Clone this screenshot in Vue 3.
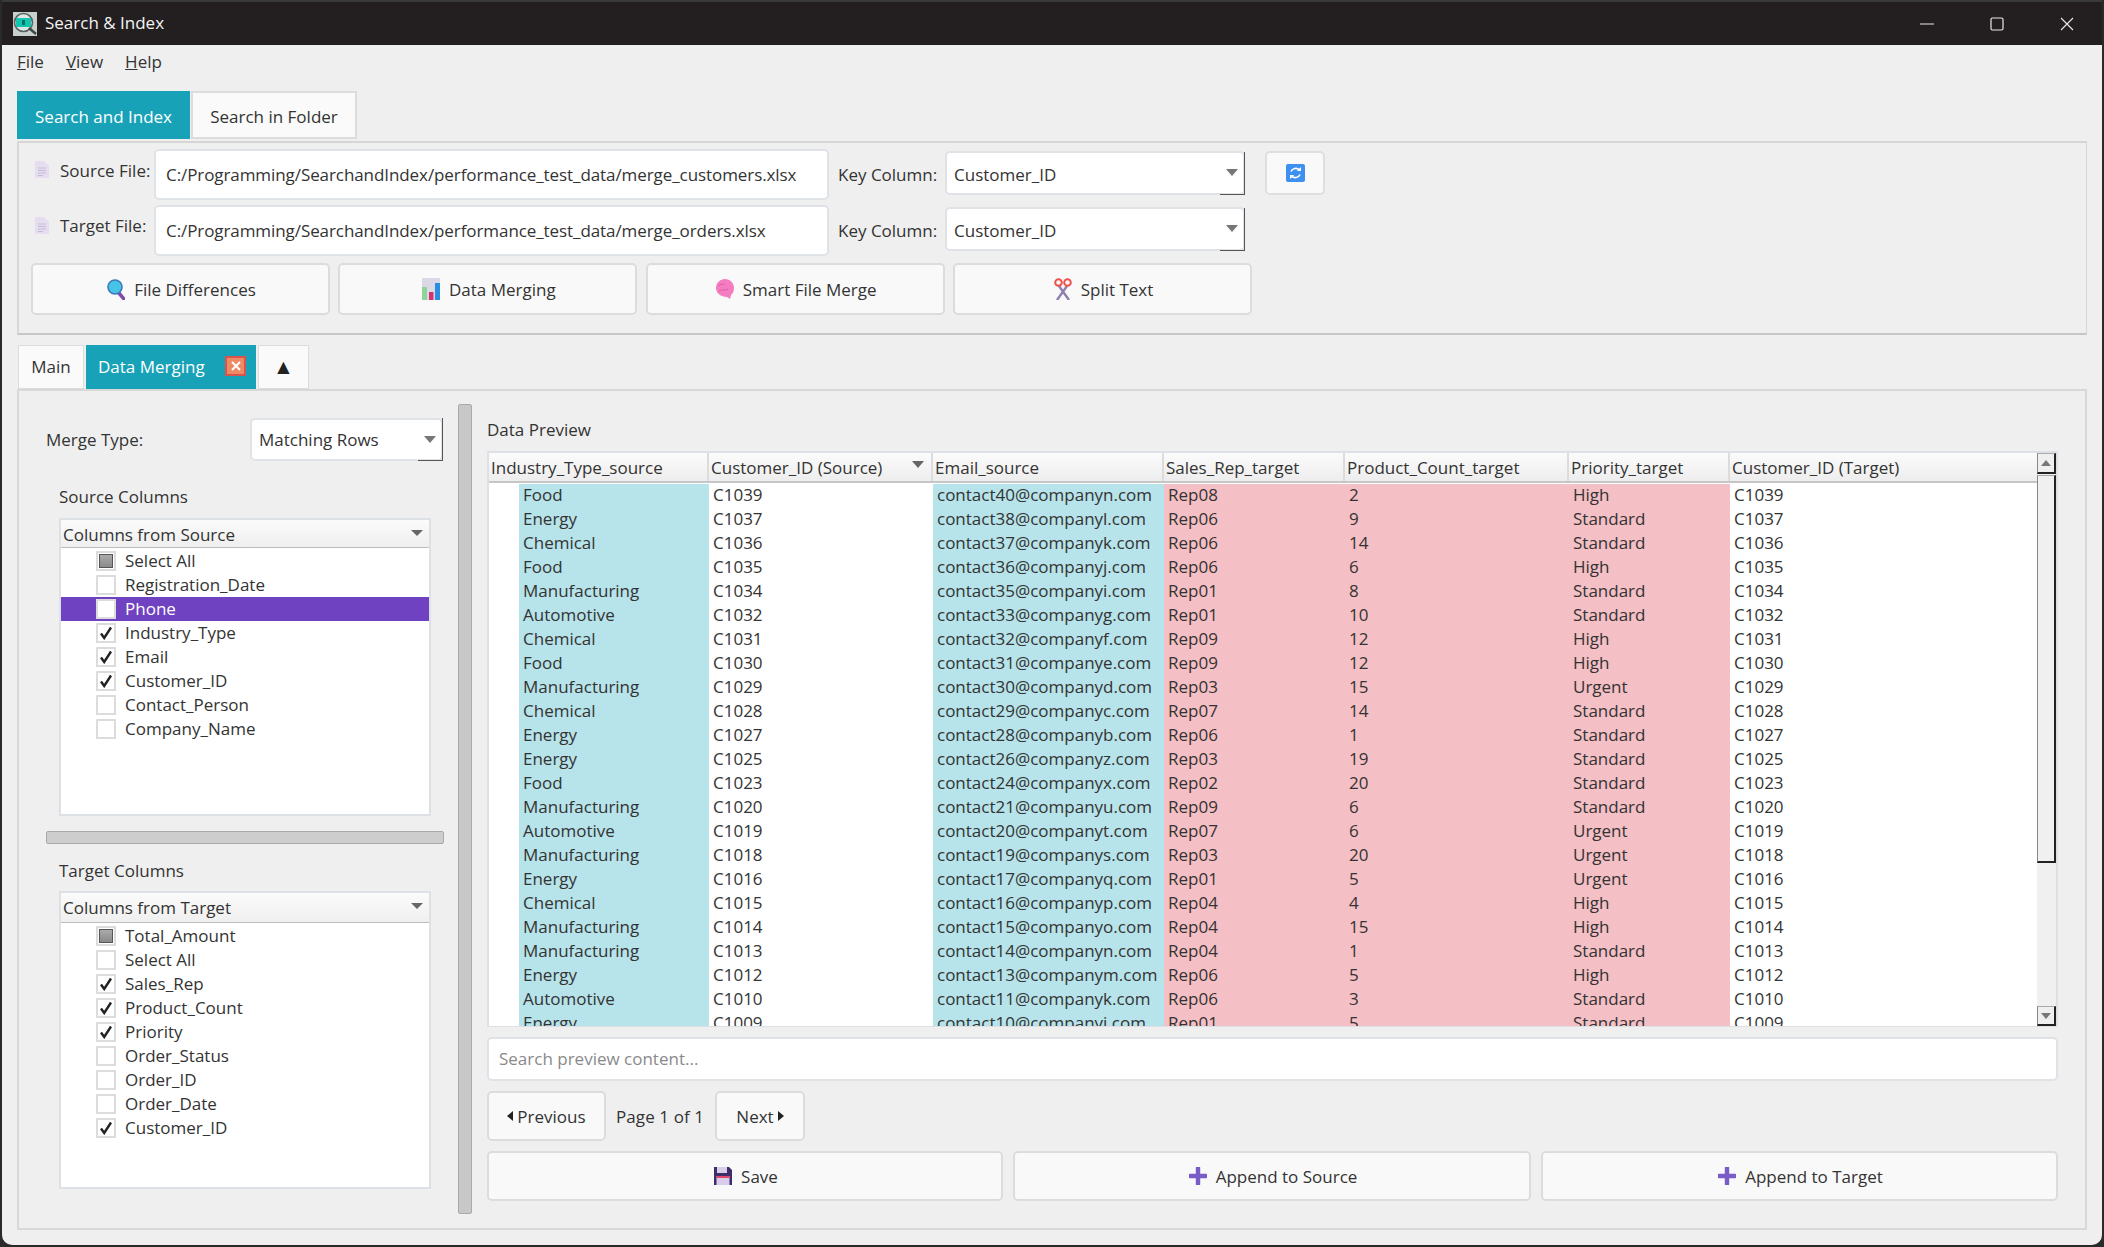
<template>
  <div class="window">
    <div class="titlebar">
      <svg class="app-icon" viewBox="0 0 24 24">
        <rect width="24" height="24" fill="#c9cfcc" />
        <circle cx="10.5" cy="10.5" r="9" fill="#dfe8e6" stroke="#56635f" stroke-width="1.6" />
        <rect x="3" y="6" width="15" height="9" fill="#12c7b0" />
        <rect x="9" y="8" width="3" height="5" fill="#0b6e62" />
        <path d="M16 16l7 6" stroke="#3d4643" stroke-width="2.4" />
      </svg>
      <span class="app-title">Search &amp; Index</span>
      <div class="win-controls">
        <svg viewBox="0 0 14 14"><path d="M0 7h14" stroke="#e8e8e8" stroke-width="1" /></svg>
        <svg viewBox="0 0 14 14"><rect x="1" y="1" width="12" height="12" rx="1.5" fill="none" stroke="#e8e8e8" stroke-width="1.2" /></svg>
        <svg viewBox="0 0 14 14"><path d="M1 1l12 12M13 1L1 13" stroke="#e8e8e8" stroke-width="1.1" /></svg>
      </div>
    </div>

    <div class="menubar">
      <span><u>F</u>ile</span>
      <span><u>V</u>iew</span>
      <span><u>H</u>elp</span>
    </div>

    <div class="content">
      <div class="top-tabs">
        <div class="top-tab active">Search and Index</div>
        <div class="top-tab">Search in Folder</div>
      </div>

      <div class="file-panel">
        <div v-for="f in files" :key="f.label" class="file-row" :class="f.cls">
          <svg class="doc-icon" viewBox="0 0 14 17">
            <path d="M0 0h9l5 5v12H0z" fill="#e6def0" />
            <path d="M3 7h8M3 9.5h8M3 12h8M3 14.5h5" stroke="#c5bdd0" stroke-width="1" />
          </svg>
          <label class="file-label">{{ f.label }}</label>
          <div class="path-input">{{ f.path }}</div>
          <label class="key-label">Key Column:</label>
          <div class="combo key-combo">
            <span>Customer_ID</span>
            <i class="combo-arrow"></i>
          </div>
          <button v-if="f.refresh" class="refresh-btn">
            <svg viewBox="0 0 19 18" width="19" height="18">
              <rect width="19" height="18" rx="2" fill="#3d8ff0" />
              <path d="M5 7.5a5 4.6 0 0 1 8.5-1.5M14 10.5a5 4.6 0 0 1-8.5 1.5" fill="none" stroke="#fff" stroke-width="1.6" />
              <path d="M15 3v4h-4.200zM4 15v-4h4.200z" fill="#fff" />
            </svg>
          </button>
        </div>

        <div class="tool-row">
          <button class="tool-btn">
            <svg viewBox="0 0 18 22" width="18" height="22">
              <path d="M11 14l6 7" stroke="#7d4da8" stroke-width="3.5" stroke-linecap="round" />
              <circle cx="8" cy="9" r="7" fill="#45c4e8" stroke="#3f78b8" stroke-width="1.6" />
            </svg>
            File Differences
          </button>
          <button class="tool-btn">
            <svg viewBox="0 0 18 22" width="18" height="22">
              <rect width="18" height="22" fill="#dcd8e8" />
              <rect x="0" y="9" width="5" height="13" fill="#8fd49a" />
              <rect x="7" y="14" width="4.5" height="8" fill="#d8326e" />
              <rect x="13" y="5" width="5" height="17" fill="#2b8fe0" />
            </svg>
            Data Merging
          </button>
          <button class="tool-btn">
            <svg viewBox="0 0 18 22" width="18" height="22">
              <path d="M9 1c5 0 9 4 9 9 0 4-2 6-3 7l-1 4-3-2C5 19 0 15 0 10c0-5 4-9 9-9z" fill="#f47cc0" />
              <path d="M2 8c3-3 5-1 7-2M3 13c3-2 6 0 9-2" stroke="#e85aa8" stroke-width="1" fill="none" />
            </svg>
            Smart File Merge
          </button>
          <button class="tool-btn">
            <svg viewBox="0 0 18 22" width="18" height="22">
              <path d="M5 8l10 14M13 8L3 22" stroke="#8d7fb0" stroke-width="2.4" />
              <circle cx="4.5" cy="4.500" r="3.300" fill="none" stroke="#f0504a" stroke-width="2" />
              <circle cx="13.5" cy="4.500" r="3.300" fill="none" stroke="#f0504a" stroke-width="2" />
            </svg>
            Split Text
          </button>
        </div>
      </div>

      <div class="main-tabs">
        <div class="main-tab main">Main</div>
        <div class="main-tab merging">
          Data Merging
          <span class="tab-close">
            <svg viewBox="0 0 10 10" width="10" height="10"><path d="M1 1l8 8M9 1l-8 8" stroke="#fff" stroke-width="2" /></svg>
          </span>
        </div>
        <div class="main-tab more">▲</div>
      </div>

      <div class="merge-panel">
        <div class="left-pane">
          <div class="merge-row">
            <label>Merge Type:</label>
            <div class="combo type-combo">
              <span>Matching Rows</span>
              <i class="combo-arrow"></i>
            </div>
          </div>

          <div class="group-title first">Source Columns</div>
          <div class="col-box">
            <div class="col-head">Columns from Source<i class="head-arrow"></i></div>
            <div
              v-for="c in sourceCols"
              :key="c.name"
              class="col-item"
              :class="{ selected: c.selected }"
            >
              <span class="check" :class="{ partial: c.state === 'partial' }">
                <svg v-if="c.state === 'on'" viewBox="0 0 14 14" width="14" height="14">
                  <path d="M2 7.5l3.2 4.5L12 1.5" fill="none" stroke="#222" stroke-width="2.4" />
                </svg>
              </span>
              {{ c.name }}
            </div>
          </div>

          <div class="h-splitter"></div>

          <div class="group-title">Target Columns</div>
          <div class="col-box target">
            <div class="col-head">Columns from Target<i class="head-arrow"></i></div>
            <div v-for="c in targetCols" :key="c.name" class="col-item">
              <span class="check" :class="{ partial: c.state === 'partial' }">
                <svg v-if="c.state === 'on'" viewBox="0 0 14 14" width="14" height="14">
                  <path d="M2 7.5l3.2 4.5L12 1.5" fill="none" stroke="#222" stroke-width="2.4" />
                </svg>
              </span>
              {{ c.name }}
            </div>
          </div>
        </div>

        <div class="v-splitter"></div>

        <div class="right-pane">
          <div class="preview-title">Data Preview</div>

          <div class="table-wrap">
            <div class="table-main">
              <div class="t-row t-head">
                <div v-for="h in headers" :key="h" class="t-cell">{{ h }}</div>
                <i class="sort-arrow"></i>
              </div>
              <div class="t-body">
                <div v-for="r in rows" :key="r.id + r.mail" class="t-row">
                  <div class="t-cell src first-col">{{ r.type }}</div>
                  <div class="t-cell">{{ r.id }}</div>
                  <div class="t-cell src">{{ r.mail }}</div>
                  <div class="t-cell tgt">{{ r.rep }}</div>
                  <div class="t-cell tgt">{{ r.count }}</div>
                  <div class="t-cell tgt">{{ r.priority }}</div>
                  <div class="t-cell">{{ r.id }}</div>
                </div>
              </div>
            </div>
            <div class="scrollbar">
              <div class="sb-btn"><i class="sb-up"></i></div>
              <div class="sb-thumb"></div>
              <div class="sb-track"></div>
              <div class="sb-btn down"><i class="sb-down"></i></div>
            </div>
          </div>

          <div class="search-input">Search preview content...</div>

          <div class="pager">
            <button class="page-btn prev"><i class="tri-left"></i>Previous</button>
            <span class="page-label">Page 1 of 1</span>
            <button class="page-btn next">Next<i class="tri-right"></i></button>
          </div>

          <div class="action-row">
            <button class="action-btn">
              <svg viewBox="0 0 18 18" width="18" height="18">
                <path d="M0 0h15l3 3v15H0z" fill="#3d2d6b" />
                <rect x="3" y="0" width="10" height="6" fill="#d8d0e8" />
                <rect x="2.5" y="9" width="13" height="9" fill="#d9cdee" />
                <rect x="2.5" y="9" width="13" height="2" fill="#e2456b" />
              </svg>
              Save
            </button>
            <button class="action-btn">
              <svg viewBox="0 0 18 18" width="18" height="18">
                <path d="M9 1v16M1 9h16" stroke="#7a5cc8" stroke-width="4.4" stroke-linecap="round" />
              </svg>
              Append to Source
            </button>
            <button class="action-btn">
              <svg viewBox="0 0 18 18" width="18" height="18">
                <path d="M9 1v16M1 9h16" stroke="#7a5cc8" stroke-width="4.4" stroke-linecap="round" />
              </svg>
              Append to Target
            </button>
          </div>
        </div>
      </div>
    </div>
  </div>
</template>

<script setup>
const base = 'C:/Programming/SearchandIndex/performance_test_data/';

const files = [
  { label: 'Source File:', path: base + 'merge_customers.xlsx', cls: 'src-row', refresh: true },
  { label: 'Target File:', path: base + 'merge_orders.xlsx', cls: 'tgt-row', refresh: false },
];

const sourceCols = [
  { name: 'Select All', state: 'partial' },
  { name: 'Registration_Date', state: 'off' },
  { name: 'Phone', state: 'off', selected: true },
  { name: 'Industry_Type', state: 'on' },
  { name: 'Email', state: 'on' },
  { name: 'Customer_ID', state: 'on' },
  { name: 'Contact_Person', state: 'off' },
  { name: 'Company_Name', state: 'off' },
];

const targetCols = [
  { name: 'Total_Amount', state: 'partial' },
  { name: 'Select All', state: 'off' },
  { name: 'Sales_Rep', state: 'on' },
  { name: 'Product_Count', state: 'on' },
  { name: 'Priority', state: 'on' },
  { name: 'Order_Status', state: 'off' },
  { name: 'Order_ID', state: 'off' },
  { name: 'Order_Date', state: 'off' },
  { name: 'Customer_ID', state: 'on' },
];

const headers = [
  'Industry_Type_source',
  'Customer_ID (Source)',
  'Email_source',
  'Sales_Rep_target',
  'Product_Count_target',
  'Priority_target',
  'Customer_ID (Target)',
];

// type | id | mail number+letter | rep | count | priority
const raw = [
  ['Food', 1039, '40', 'n', '08', 2, 'High'],
  ['Energy', 1037, '38', 'l', '06', 9, 'Standard'],
  ['Chemical', 1036, '37', 'k', '06', 14, 'Standard'],
  ['Food', 1035, '36', 'j', '06', 6, 'High'],
  ['Manufacturing', 1034, '35', 'i', '01', 8, 'Standard'],
  ['Automotive', 1032, '33', 'g', '01', 10, 'Standard'],
  ['Chemical', 1031, '32', 'f', '09', 12, 'High'],
  ['Food', 1030, '31', 'e', '09', 12, 'High'],
  ['Manufacturing', 1029, '30', 'd', '03', 15, 'Urgent'],
  ['Chemical', 1028, '29', 'c', '07', 14, 'Standard'],
  ['Energy', 1027, '28', 'b', '06', 1, 'Standard'],
  ['Energy', 1025, '26', 'z', '03', 19, 'Standard'],
  ['Food', 1023, '24', 'x', '02', 20, 'Standard'],
  ['Manufacturing', 1020, '21', 'u', '09', 6, 'Standard'],
  ['Automotive', 1019, '20', 't', '07', 6, 'Urgent'],
  ['Manufacturing', 1018, '19', 's', '03', 20, 'Urgent'],
  ['Energy', 1016, '17', 'q', '01', 5, 'Urgent'],
  ['Chemical', 1015, '16', 'p', '04', 4, 'High'],
  ['Manufacturing', 1014, '15', 'o', '04', 15, 'High'],
  ['Manufacturing', 1013, '14', 'n', '04', 1, 'Standard'],
  ['Energy', 1012, '13', 'm', '06', 5, 'High'],
  ['Automotive', 1010, '11', 'k', '06', 3, 'Standard'],
  ['Energy', 1009, '10', 'j', '01', 5, 'Standard'],
];

const rows = raw.map(([type, id, n, l, rep, count, priority]) => ({
  type,
  id: 'C' + id,
  mail: `contact${n}@company${l}.com`,
  rep: 'Rep' + rep,
  count,
  priority,
}));
</script>

<style>
html,
body {
  margin: 0;
  background: #2a2a2a;
}
</style>

<style scoped>
.window {
  width: 2100px;
  height: 1245px;
  margin-left: 2px;
  background: #efefef;
  border-radius: 0 0 10px 10px;
  overflow: hidden;
  font-family: 'Open Sans', 'Liberation Sans', sans-serif;
  font-size: 17px;
  color: #333;
  display: flex;
  flex-direction: column;
}

button {
  font: inherit;
  color: inherit;
}

.titlebar {
  height: 45px;
  flex: none;
  box-sizing: border-box;
  border-top: 2px solid #3b3a3a;
  background: #231f20;
  display: flex;
  align-items: center;
  padding-left: 11px;
  color: #f4f4f4;
}

.app-icon {
  width: 24px;
  height: 24px;
}

.app-title {
  margin-left: 8px;
  font-size: 17px;
  margin-top: -2px;
}

.win-controls {
  margin-left: auto;
  display: flex;
  align-items: center;
  gap: 56px;
  padding-right: 28px;
}

.win-controls svg {
  width: 14px;
  height: 14px;
}

.menubar {
  height: 46px;
  flex: none;
  display: flex;
  align-items: center;
  gap: 22px;
  padding-left: 15px;
  padding-bottom: 13px;
  box-sizing: border-box;
}

.content {
  flex: 1;
  padding: 0 15px 0 15px;
  display: flex;
  flex-direction: column;
}

.top-tabs {
  display: flex;
  height: 48px;
  flex: none;
}

.top-tab {
  width: 166px;
  box-sizing: border-box;
  display: flex;
  align-items: center;
  justify-content: center;
  background: #fafafa;
  border: 2px solid #dcdcdc;
  margin-left: 1px;
  padding-top: 2px;
}

.top-tab.active {
  width: 173px;
  margin-left: 0;
  background: #17a2b8;
  border-color: #17a2b8;
  color: #fff;
}

.file-panel {
  margin-top: 2px;
  height: 194px;
  box-sizing: border-box;
  border: 2px solid #d6d6d6;
  border-right-width: 1px;
  border-bottom-color: #c6c6c6;
  padding-top: 6px;
  flex: none;
}

.file-row {
  display: flex;
  align-items: center;
  height: 51px;
  margin-bottom: 5px;
  padding-left: 16px;
}

.doc-icon {
  width: 14px;
  height: 17px;
  margin-top: -10px;
}

.file-label {
  width: 94px;
  margin-left: 11px;
  margin-top: -8px;
  white-space: nowrap;
}

.tgt-row .file-label {
  margin-top: -10px;
}

.path-input {
  width: 675px;
  height: 51px;
  box-sizing: border-box;
  background: #fff;
  border: 2px solid #dfe2e6;
  border-radius: 5px;
  padding-left: 10px;
  line-height: 48px;
  letter-spacing: -0.08px;
  white-space: nowrap;
  overflow: hidden;
}

.key-label {
  width: 107px;
  margin-left: 9px;
  white-space: nowrap;
}

.combo {
  box-sizing: border-box;
  background: #fff;
  border: 2px solid #dfe2e6;
  border-radius: 5px;
  display: flex;
  align-items: center;
  position: relative;
}

.combo::after {
  content: '';
  position: absolute;
  right: -2px;
  bottom: -2px;
  width: 24px;
  height: 42px;
  border-right: 1px solid #555;
  border-bottom: 1px solid #555;
}

.combo-arrow {
  position: absolute;
  right: 5px;
  top: 50%;
  margin-top: -4px;
  border: 6px solid transparent;
  border-top: 7px solid #777;
  border-bottom: 0;
}

.key-combo {
  width: 300px;
  height: 44px;
  padding: 2px 0 0 7px;
  margin-top: -3px;
}

.refresh-btn {
  width: 60px;
  height: 44px;
  margin-left: 20px;
  margin-top: -3px;
  background: #f9f9f9;
  border: 2px solid #dfdfdf;
  border-radius: 5px;
  display: flex;
  align-items: center;
  justify-content: center;
  padding: 0;
}

.tool-row {
  display: flex;
  gap: 8.33px;
  padding-left: 12px;
  margin-top: 7px;
}

.tool-btn,
.action-btn,
.page-btn {
  background: #f9f9f9;
  border: 2px solid #dcdcdc;
  border-radius: 5px;
  display: flex;
  align-items: center;
  justify-content: center;
  gap: 9px;
  padding: 0;
}

.tool-btn {
  width: 299px;
  height: 52px;
  padding-left: 2px;
}

.main-tabs {
  margin-top: 10px;
  height: 44px;
  flex: none;
  display: flex;
  padding-left: 1px;
  gap: 2px;
}

.main-tab {
  box-sizing: border-box;
  background: #fafafa;
  border: 1px solid #dcdcdc;
  display: flex;
  align-items: center;
  justify-content: center;
  padding-bottom: 2px;
}

.main-tab.main {
  width: 66px;
}

.main-tab.merging {
  width: 170px;
  background: #17a2b8;
  border-color: #17a2b8;
  color: #fff;
  justify-content: flex-start;
  padding-left: 11px;
  position: relative;
}

.tab-close {
  position: absolute;
  left: 138px;
  top: 10px;
  width: 21px;
  height: 20px;
  box-sizing: border-box;
  background: #ee8a63;
  border: 2px solid #d9534f;
  display: flex;
  align-items: center;
  justify-content: center;
}

.main-tab.more {
  width: 51px;
  color: #222;
  font-size: 21px;
}

.merge-panel {
  height: 841px;
  box-sizing: border-box;
  border: 2px solid #d8d8d8;
  display: flex;
  flex: none;
}

.left-pane {
  width: 439px;
  flex: none;
  box-sizing: border-box;
  padding: 27px 0 0 27px;
}

.merge-row {
  display: flex;
  align-items: center;
  height: 43px;
}

.merge-row label {
  width: 204px;
}

.type-combo {
  width: 193px;
  height: 43px;
  padding-left: 7px;
}

.group-title {
  margin-left: 13px;
  line-height: 24px;
  margin-top: 15px;
}

.group-title.first {
  margin-top: 24px;
}

.col-box {
  margin: 9px 0 0 13px;
  width: 372px;
  height: 298px;
  box-sizing: border-box;
  background: #fff;
  border: 2px solid #dde0e4;
}

.col-box.target {
  margin-top: 8px;
}

.col-head {
  height: 28px;
  box-sizing: border-box;
  padding-left: 2px;
  line-height: 30px;
  background: linear-gradient(#fbfbfb, #efefef);
  border-bottom: 1px solid #bdbdbd;
  margin: 0 0 1px;
  position: relative;
}

.target .col-head {
  height: 30px;
}

.head-arrow {
  position: absolute;
  right: 6px;
  top: 10px;
  border: 6px solid transparent;
  border-top: 6px solid #666;
  border-bottom: 0;
}

.col-item {
  height: 24px;
  line-height: 24px;
  display: flex;
  align-items: center;
  padding-left: 35px;
}

.col-item.selected {
  background: #6f42c1;
  color: #fff;
}

.check {
  width: 20px;
  height: 20px;
  box-sizing: border-box;
  border: 2px solid #dcdcdc;
  background: #fff;
  display: flex;
  align-items: center;
  justify-content: center;
  margin-right: 9px;
  flex: none;
}

.check.partial::before {
  content: '';
  width: 14px;
  height: 14px;
  box-sizing: border-box;
  background: linear-gradient(#aaa, #8a8a8a);
  border: 1px solid #555;
}

.h-splitter {
  width: 398px;
  height: 13px;
  box-sizing: border-box;
  background: #cdcdcd;
  border: 1px solid #aaa;
  border-radius: 2px;
  margin-top: 15px;
}

.v-splitter {
  width: 14px;
  height: 810px;
  flex: none;
  box-sizing: border-box;
  margin-top: 13px;
  background: #c8c8c8;
  border: 1px solid #aaa;
  border-radius: 2px;
}

.right-pane {
  width: 1571px;
  margin-left: 15px;
  flex: none;
  display: flex;
  flex-direction: column;
}

.preview-title {
  height: 60px;
  box-sizing: border-box;
  padding-top: 27px;
  line-height: 24px;
}

.table-wrap {
  height: 576px;
  box-sizing: border-box;
  background: #fff;
  border: 2px solid #dde0e4;
  border-bottom-width: 1px;
  border-right-color: #dde0e4;
  display: flex;
  overflow: hidden;
  flex: none;
}

.table-main {
  width: 1548px;
  flex: none;
}

.t-row {
  display: grid;
  grid-template-columns: 220px 224px 231px 181px 224px 161px 307px;
  height: 24px;
}

.t-cell {
  line-height: 22px;
  white-space: nowrap;
  overflow: hidden;
  padding-left: 4px;
}

.t-head {
  height: 30px;
  position: relative;
  background: linear-gradient(#fbfbfb, #ededed);
  border-bottom: 2px solid #c6c6c6;
  box-sizing: border-box;
  margin-bottom: 1px;
}

.t-head .t-cell {
  line-height: 30px;
  padding-left: 2px;
  border-right: 2px solid #dcdcdc;
}

.t-head .t-cell:last-of-type {
  border-right: 0;
}

.sort-arrow {
  position: absolute;
  left: 423px;
  top: 8px;
  border: 6px solid transparent;
  border-top: 7px solid #666;
  border-bottom: 0;
}

.t-body {
  height: 543px;
  overflow: hidden;
}

.src {
  background: #b7e3ea;
}

.tgt {
  background: #f4bfc5;
}

.first-col {
  background: linear-gradient(90deg, #fff 30px, #b7e3ea 30px);
  padding-left: 34px;
}

.scrollbar {
  width: 19px;
  flex: none;
  background: #f0f0f0;
  display: flex;
  flex-direction: column;
}

.sb-btn {
  height: 21px;
  flex: none;
  box-sizing: border-box;
  background: #efefef;
  border-left: 1px solid #888;
  border-top: 1px solid #aaa;
  border-right: 2px solid #222;
  border-bottom: 2px solid #222;
  display: flex;
  align-items: center;
  justify-content: center;
}

.sb-btn.down {
  height: 20px;
  margin-top: auto;
}

.sb-up {
  border: 5px solid transparent;
  border-bottom: 6px solid #777;
  border-top: 0;
}

.sb-down {
  border: 5px solid transparent;
  border-top: 6px solid #777;
  border-bottom: 0;
}

.sb-thumb {
  height: 388px;
  flex: none;
  box-sizing: border-box;
  margin-top: 1px;
  background: #f0f0f0;
  border-left: 1px solid #888;
  border-top: 1px solid #aaa;
  border-right: 2px solid #222;
  border-bottom: 2px solid #222;
}

.sb-track {
  flex: 1;
}

.search-input {
  margin-top: 10px;
  height: 44px;
  flex: none;
  box-sizing: border-box;
  background: #fff;
  border: 2px solid #dfe2e6;
  border-radius: 5px;
  padding-left: 10px;
  line-height: 40px;
  color: #8a8a8a;
}

.pager {
  display: flex;
  align-items: center;
  margin-top: 10px;
  height: 50px;
  flex: none;
}

.page-btn {
  height: 50px;
  gap: 4px;
}

.page-btn.prev {
  width: 119px;
}

.page-btn.next {
  width: 90px;
}

.page-label {
  width: 109px;
  padding-left: 10px;
  box-sizing: border-box;
  letter-spacing: 0.1px;
}

.tri-left {
  border: 5px solid transparent;
  border-right: 6px solid #222;
  border-left: 0;
}

.tri-right {
  border: 5px solid transparent;
  border-left: 6px solid #222;
  border-right: 0;
}

.action-row {
  display: grid;
  grid-template-columns: 516px 518px 517px;
  gap: 10px;
  margin-top: 10px;
}

.action-btn {
  height: 50px;
  padding-left: 2px;
}
</style>
